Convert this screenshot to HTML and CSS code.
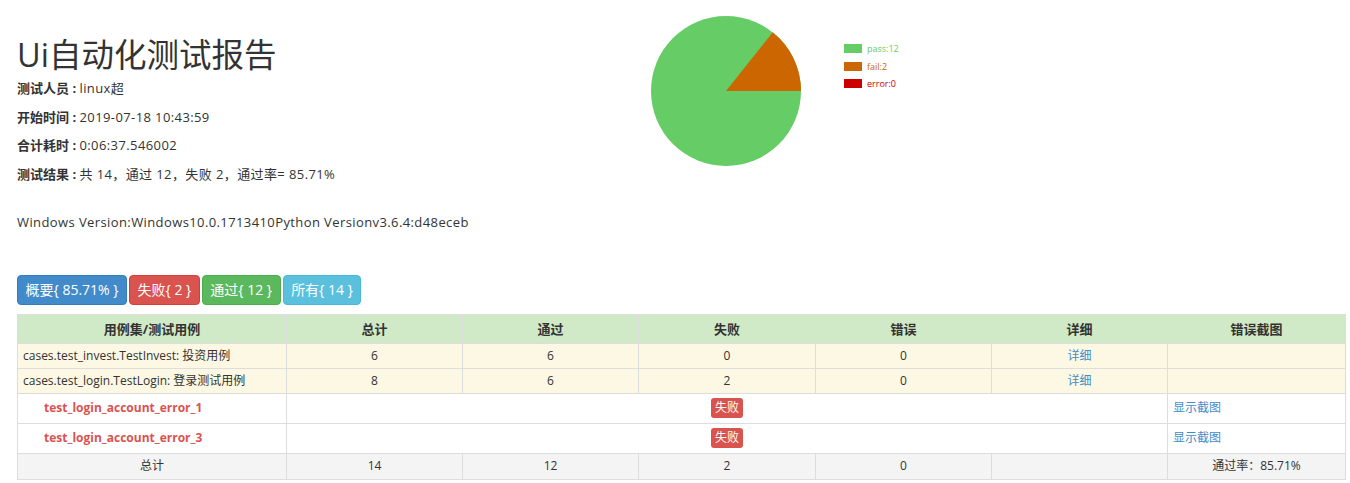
FILE: index.html
```html
<!DOCTYPE html>
<html lang="zh-CN">
<head>
<meta charset="utf-8">
<title>Ui自动化测试报告</title>
<link rel="stylesheet" href="styles.css">
</head>
<body>
<div class="page">
  <div class="top">
    <div class="info">
      <h1 class="title">Ui自动化测试报告</h1>
      <p class="attr"><strong>测试人员 : </strong>linux超</p>
      <p class="attr"><strong>开始时间 : </strong>2019-07-18 10:43:59</p>
      <p class="attr"><strong>合计耗时 : </strong>0:06:37.546002</p>
      <p class="attr"><strong>测试结果 : </strong>共 14，通过 12，失败 2，通过率= 85.71%</p>
    </div>
    <svg class="chart" width="320" height="170" viewBox="0 0 320 170">
      <circle cx="92" cy="75" r="75" fill="#66cc66"/>
      <path d="M92 75 L167 75 A75 75 0 0 0 138.76 16.36 Z" fill="#cc6600"/>
      <rect x="210" y="28" width="18" height="9" fill="#66cc66"/>
      <text x="233" y="36" class="lg lg-pass">pass:12</text>
      <rect x="210" y="46" width="18" height="9" fill="#cc6600"/>
      <text x="233" y="54" class="lg lg-fail">fail:2</text>
      <rect x="210" y="63" width="18" height="9" fill="#cc0000"/>
      <text x="233" y="71" class="lg lg-error">error:0</text>
    </svg>
  </div>
  <p class="env">Windows Version:Windows10.0.1713410Python Versionv3.6.4:d48eceb</p>
  <div class="tabs">
    <a class="btn btn-primary">概要{ 85.71% }</a>
    <a class="btn btn-danger">失败{ 2 }</a>
    <a class="btn btn-success">通过{ 12 }</a>
    <a class="btn btn-info">所有{ 14 }</a>
  </div>
  <table class="report">
    <colgroup>
      <col class="c1"><col class="c2"><col class="c3"><col class="c4"><col class="c5"><col class="c6"><col class="c7">
    </colgroup>
    <thead>
      <tr class="head">
        <th>用例集/测试用例</th><th>总计</th><th>通过</th><th>失败</th><th>错误</th><th>详细</th><th>错误截图</th>
      </tr>
    </thead>
    <tbody>
      <tr class="suite">
        <td class="left">cases.test_invest.TestInvest: 投资用例</td><td>6</td><td>6</td><td>0</td><td>0</td><td><a class="link">详细</a></td><td></td>
      </tr>
      <tr class="suite">
        <td class="left">cases.test_login.TestLogin: 登录测试用例</td><td>8</td><td>6</td><td>2</td><td>0</td><td><a class="link">详细</a></td><td></td>
      </tr>
      <tr class="case">
        <td class="left name">test_login_account_error_1</td><td colspan="5"><span class="badge">失败</span></td><td class="left"><a class="link">显示截图</a></td>
      </tr>
      <tr class="case">
        <td class="left name">test_login_account_error_3</td><td colspan="5"><span class="badge">失败</span></td><td class="left"><a class="link">显示截图</a></td>
      </tr>
      <tr class="total">
        <td>总计</td><td>14</td><td>12</td><td>2</td><td>0</td><td></td><td>通过率：85.71%</td>
      </tr>
    </tbody>
  </table>
</div>
</body>
</html>
```
FILE: styles.css
```css
* { box-sizing: border-box; }
html, body { margin: 0; padding: 0; background: #fff; }
body {
  font-family: "Open Sans", "Noto Sans CJK SC", sans-serif;
  font-size: 13px;
  line-height: 1.42857;
  color: #333;
}
.page { padding: 0 4px 0 17px; }
.top { display: flex; align-items: flex-start; }
.info { flex: 0 0 617px; }
.title {
  margin: 37px 0 7px;
  font-size: 32.5px;
  font-weight: 400;
  line-height: 35px;
  color: #333;
}
.attr { margin: 0 0 10px; letter-spacing: 0.4px; }
.attr strong { font-weight: 700; letter-spacing: 0; }
.chart { display: block; margin-top: 16px; }
.lg { font-family: "Open Sans", sans-serif; font-size: 9px; }
.lg-pass { fill: #66cc66; }
.lg-fail { fill: #cc6600; }
.lg-error { fill: #cc0000; }
.env { margin: 20px 0 0; letter-spacing: 0.4px; }
.tabs { display: flex; gap: 2px; margin-top: 43px; }
.btn {
  display: inline-block;
  padding: 4px 7.5px;
  font-size: 14px;
  line-height: 20px;
  color: #fff;
  border: 1px solid transparent;
  border-radius: 4px;
}
.btn-primary { background: #428bca; border-color: #357ebd; }
.btn-danger { background: #d9534f; border-color: #d43f3a; }
.btn-success { background: #5cb85c; border-color: #4cae4c; }
.btn-info { background: #5bc0de; border-color: #46b8da; }
.report {
  margin-top: 9px;
  width: 1329px;
  table-layout: fixed;
  border-collapse: collapse;
  font-size: 12px;
}
.c1 { width: 269px; }
.c2, .c3, .c5, .c6 { width: 176px; }
.c4 { width: 177px; }
.c7 { width: 178px; }
.report th, .report td {
  border: 1px solid #ddd;
  text-align: center;
  vertical-align: middle;
}
.report th {
  padding: 5px;
  font-size: 13px;
  font-weight: 700;
  line-height: 18px;
}
.report td { padding: 4px 5px; line-height: 16px; }
.report td.left { text-align: left; }
.head th { background: #d0e9c6; }
.suite td { background: #fcf8e3; }
.case td { background: #fff; height: 30px; padding-top: 3px; padding-bottom: 3px; }
.total td { background: #f4f4f4; height: 26px; }
.name { padding-left: 26px !important; color: #d9534f; font-weight: 700; }
.link { color: #428bca; text-decoration: none; }
.badge {
  display: inline-block;
  padding: 1px 4px;
  font-size: 12px;
  line-height: 18px;
  color: #fff;
  background: #d9534f;
  border-radius: 3px;
  vertical-align: middle;
}
```
